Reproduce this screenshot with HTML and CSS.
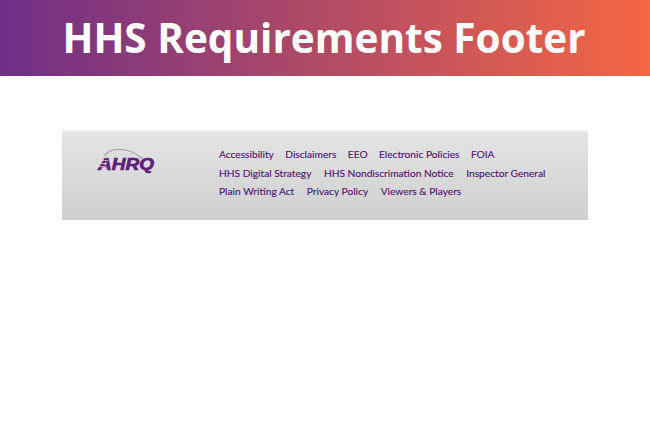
FILE: index.html
```html
<!DOCTYPE html>
<html lang="en">
<head>
    <meta charset="UTF-8" />
    <title>HHS Requirements Footer</title>
    <link rel="stylesheet" href="styles.css">
</head>
<body>
    <header class="banner">
        <h1>HHS Requirements Footer</h1>
    </header>
    <footer class="site-footer">
        <div class="logo">
            <svg width="60" height="30" viewBox="0 0 60 30" aria-label="AHRQ logo">
                <path d="M7 9 C14 0 30 -1 46 12" fill="none" stroke="#a09ca0" stroke-width="1.1"/>
                <text x="1" y="23" class="logo-text" textLength="56" lengthAdjust="spacingAndGlyphs">AHRQ</text>
                <path d="M1 19.6H9M3 16.6H10M5 13.6H11M7 10.6H12" stroke="#dadada" stroke-width="0.8"/>
            </svg>
        </div>
        <nav class="links">
            <div class="link-row tight">
                <a href="#">Accessibility</a>
                <a href="#">Disclaimers</a>
                <a href="#">EEO</a>
                <a href="#">Electronic Policies</a>
                <a href="#">FOIA</a>
            </div>
            <div class="link-row">
                <a href="#">HHS Digital Strategy</a>
                <a href="#">HHS Nondiscrimation Notice</a>
                <a href="#">Inspector General</a>
            </div>
            <div class="link-row">
                <a href="#">Plain Writing Act</a>
                <a href="#">Privacy Policy</a>
                <a href="#">Viewers &amp; Players</a>
            </div>
        </nav>
    </footer>
</body>
</html>
```

FILE: styles.css
```css
body{
    margin: 0;
    background: #fff;
    font-family: "Open Sans", sans-serif;
}
.banner{
    height: 76px;
    padding-right: 2px;
    box-sizing: border-box;
    display: flex;
    align-items: center;
    justify-content: center;
    background: linear-gradient(to right, #6f2f87, #f46743);
}
h1{
    margin: 0;
    color: #fff;
    font-size: 40.5px;
    font-weight: 700;
    line-height: 1;
}
.site-footer{
    width: 526px;
    height: 88px;
    margin: 54px 0 0 62px;
    display: flex;
    border-top: 2px solid #efefef;
    background: linear-gradient(to bottom, #e4e4e4, #cfcfcf);
}
.logo{
    width: 157px;
    padding: 15px 0 0 35px;
    box-sizing: border-box;
}
.logo-text{
    font-family: "Liberation Sans", sans-serif;
    font-size: 17px;
    font-weight: 700;
    font-style: italic;
    fill: #5f1d79;
    stroke: #5f1d79;
    stroke-width: 0.7;
}
.links{
    padding-top: 13px;
    display: flex;
    flex-direction: column;
}
.link-row{
    display: flex;
    gap: 12.5px;
    height: 18.5px;
    line-height: 18px;
}
.link-row.tight{
    gap: 11.4px;
}
.link-row a{
    color: #511671;
    font-family: Lato, sans-serif;
    font-size: 10.2px;
    text-decoration: none;
    -webkit-text-stroke: 0.15px #511671;
}
```
